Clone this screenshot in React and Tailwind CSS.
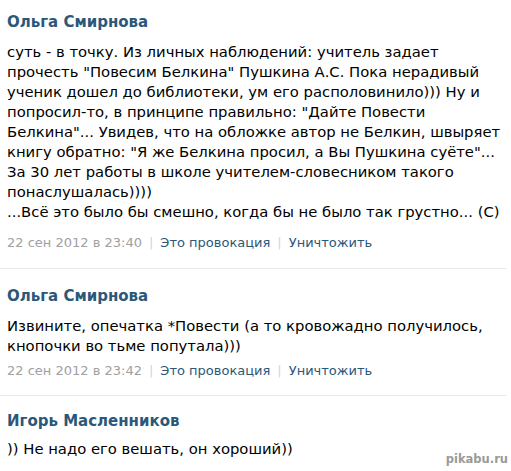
const comments = [
  {
    name: "Ольга Смирнова",
    lines: [
      "суть - в точку. Из личных наблюдений: учитель задает",
      "прочесть \"Повесим Белкина\" Пушкина А.С. Пока нерадивый",
      "ученик дошел до библиотеки, ум его располовинило))) Ну и",
      "попросил-то, в принципе правильно: \"Дайте Повести",
      "Белкина\"... Увидев, что на обложке автор не Белкин, швыряет",
      "книгу обратно: \"Я же Белкина просил, а Вы Пушкина суёте\"...",
      "За 30 лет работы в школе учителем-словесником такого",
      "понаслушалась))))",
      "...Всё это было бы смешно, когда бы не было так грустно... (С)",
    ],
    date: "22 сен 2012 в 23:40",
    box: "pt-[12px] pb-[16px]",
    textGap: "mt-[10px]",
    dateGap: "mt-[12px]",
  },
  {
    name: "Ольга Смирнова",
    lines: [
      "Извините, опечатка *Повести (а то кровожадно получилось,",
      "кнопочки во тьме попутала)))",
    ],
    date: "22 сен 2012 в 23:42",
    box: "pt-[17px] pb-[15px]",
    textGap: "mt-[10px]",
    dateGap: "mt-[6px]",
  },
  {
    name: "Игорь Масленников",
    lines: [")) Не надо его вешать, он хороший))"],
    box: "pt-[15px]",
    textGap: "mt-[8px]",
  },
];

const Comment = ({ c, last }) => (
  <div className={`mr-[5px] ${last ? "" : "border-b border-[#e7e8ec]"}`}>
    <div className={`pl-[7px] ${c.box}`}>
      <div className="text-[15px] leading-[20px] font-bold text-[#2b587a]">{c.name}</div>
      <div className={`${c.textGap} text-[14.8px] leading-[20px] text-black`}>
        {c.lines.map((l, i) => (
          <div key={i} className="whitespace-nowrap">{l}</div>
        ))}
      </div>
      {c.date && (
        <div className={`${c.dateGap} flex items-center text-[13px] leading-[18px]`}>
          <span className="text-[#a0a0a0]">{c.date}</span>
          <span className="mx-[7px] text-[#d5d5d5]">|</span>
          <span className="text-[#2b587a]">Это провокация</span>
          <span className="mx-[7px] text-[#d5d5d5]">|</span>
          <span className="text-[#2b587a]">Уничтожить</span>
        </div>
      )}
    </div>
  </div>
);

export default function App() {
  return (
    <div className="relative w-[511px] h-[471px] overflow-hidden bg-white font-['DejaVu_Sans',sans-serif]">
      {comments.map((c, i) => (
        <Comment key={i} c={c} last={i === comments.length - 1} />
      ))}
      <div className="absolute right-[3px] bottom-[3px] text-[11.5px] font-bold text-[#9a9a9a] [text-shadow:0_0_2px_#fff,0_0_2px_#fff]">
        pikabu.ru
      </div>
    </div>
  );
}
